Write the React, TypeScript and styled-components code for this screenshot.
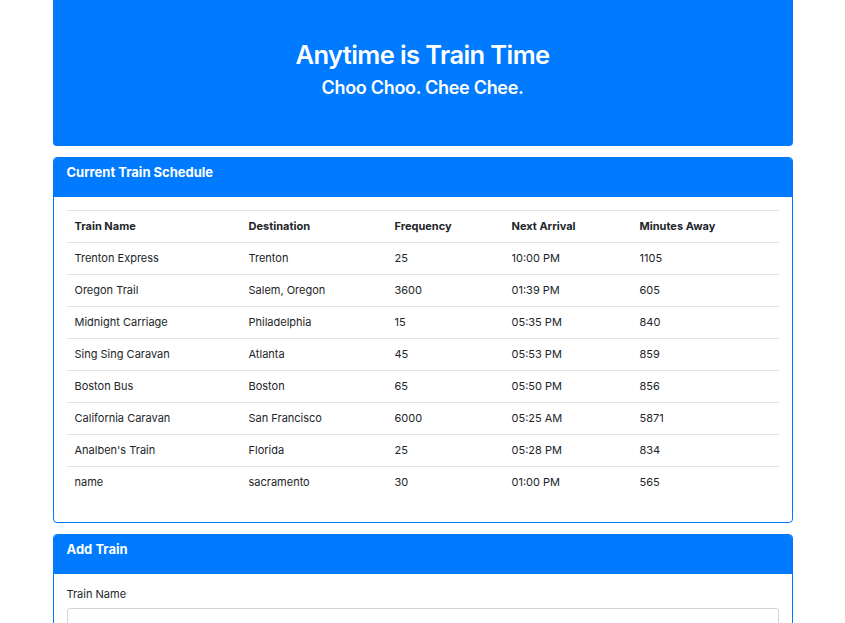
import React from 'react';
import styled, { createGlobalStyle } from 'styled-components';

const GlobalStyle = createGlobalStyle`
  body {
    margin: 0;
    background: #fff;
    font-family: Inter, 'Helvetica Neue', Arial, sans-serif;
    color: #212529;
  }
`;

const StyledContainer = styled.div`
  margin: 0 auto;
  width: 740px;
  display: flex;
  flex-direction: column;
  gap: 11px;
`;

const StyledJumbotron = styled.header`
  background: #007bff;
  border-radius: 0 0 4px 4px;
  color: #fff;
  height: 146px;
  display: flex;
  flex-direction: column;
  align-items: center;
  padding-top: 38px;
  box-sizing: border-box;

  & h1 {
    font-size: 25.5px;
    font-weight: 600;
    margin: 0;
    line-height: 34px;
    letter-spacing: -0.6px;
  }

  & h2 {
    font-size: 18px;
    font-weight: 600;
    margin: 3px 0 0;
    line-height: 26px;
    letter-spacing: -0.3px;
  }
`;

const StyledCard = styled.section`
  border: 1px solid #007bff;
  border-radius: 4px;
  overflow: hidden;
`;

const StyledCardHeader = styled.div`
  background: #007bff;
  color: #fff;
  font-size: 13px;
  font-weight: 700;
  height: 39px;
  line-height: 28px;
  padding: 0 13px;
  box-sizing: border-box;
`;

const StyledCardBody = styled.div<{ $top?: number; $bottom?: number }>`
  padding: ${(p) => p.$top ?? 13}px 13px ${(p) => p.$bottom ?? 13}px;
`;

const StyledTable = styled.table`
  width: 100%;
  border-collapse: collapse;
  font-size: 11px;

  & th,
  & td {
    text-align: left;
    border-top: 1px solid #dee2e6;
    height: 32px;
    padding: 0 8px 1px;
    box-sizing: border-box;
  }

  & th {
    font-weight: 700;
    border-bottom: 1px solid #dee2e6;
    padding-bottom: 2px;
  }

  & thead + tbody tr:first-child td {
    border-top: none;
  }
`;

const StyledLabel = styled.label`
  display: block;
  font-size: 11px;
  margin: 0 0 7px;
`;

const StyledInput = styled.input`
  display: block;
  width: 100%;
  box-sizing: border-box;
  height: 30px;
  border: 1px solid #ced4da;
  border-radius: 3px;
`;

const trains = [
  ['Trenton Express', 'Trenton', '25', '10:00 PM', '1105'],
  ['Oregon Trail', 'Salem, Oregon', '3600', '01:39 PM', '605'],
  ['Midnight Carriage', 'Philadelphia', '15', '05:35 PM', '840'],
  ['Sing Sing Caravan', 'Atlanta', '45', '05:53 PM', '859'],
  ['Boston Bus', 'Boston', '65', '05:50 PM', '856'],
  ['California Caravan', 'San Francisco', '6000', '05:25 AM', '5871'],
  ["Analben's Train", 'Florida', '25', '05:28 PM', '834'],
  ['name', 'sacramento', '30', '01:00 PM', '565'],
];

const widths = [174, 146, 117, 128, 147];

export default function App() {
  return (
    <>
      <GlobalStyle />
      <StyledContainer>
        <StyledJumbotron>
          <h1>Anytime is Train Time</h1>
          <h2>Choo Choo. Chee Chee.</h2>
        </StyledJumbotron>

        <StyledCard>
          <StyledCardHeader>Current Train Schedule</StyledCardHeader>
          <StyledCardBody $bottom={23}>
            <StyledTable>
              <colgroup>
                {widths.map((w, i) => (
                  <col key={i} style={{ width: w }} />
                ))}
              </colgroup>
              <thead>
                <tr>
                  <th>Train Name</th>
                  <th>Destination</th>
                  <th>Frequency</th>
                  <th>Next Arrival</th>
                  <th>Minutes Away</th>
                </tr>
              </thead>
              <tbody>
                {trains.map((row) => (
                  <tr key={row[0]}>
                    {row.map((cell, i) => (
                      <td key={i}>{cell}</td>
                    ))}
                  </tr>
                ))}
              </tbody>
            </StyledTable>
          </StyledCardBody>
        </StyledCard>

        <StyledCard>
          <StyledCardHeader>Add Train</StyledCardHeader>
          <StyledCardBody $top={13}>
            <StyledLabel>Train Name</StyledLabel>
            <StyledInput type="text" />
          </StyledCardBody>
        </StyledCard>
      </StyledContainer>
    </>
  );
}
